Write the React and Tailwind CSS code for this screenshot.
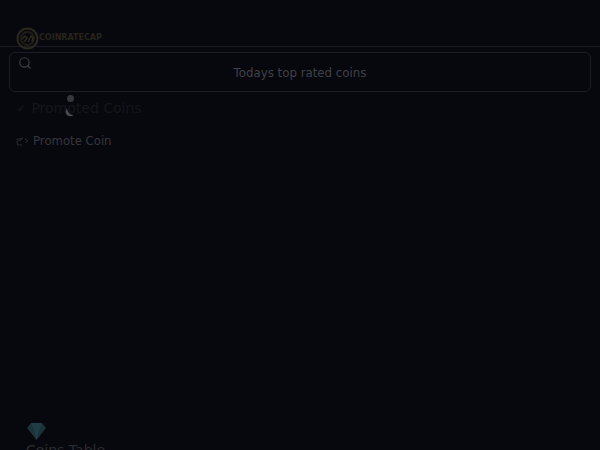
import { Search } from "lucide-react";

function Logo() {
  return (
    <svg width="23" height="23" viewBox="0 0 23 23" fill="none" className="shrink-0">
      <circle cx="11.5" cy="11.5" r="10" stroke="#2b281e" strokeWidth="2" />
      <circle cx="11.5" cy="11.5" r="6.5" stroke="#1f1d17" strokeWidth="2" />
      <path d="M6 12l3-3 2 2-3 4M12 15l3-6 2 2-1 4" stroke="#2b281e" strokeWidth="1.5" />
    </svg>
  );
}

function App() {
  return (
    <div className="relative h-[450px] w-[600px] overflow-hidden bg-[#07080d] font-['DejaVu_Sans',sans-serif]">
      <header className="flex h-[47px] items-end border-b border-[#1a1b20] pl-4">
        <div className="-mb-[3.5px] flex items-center">
          <Logo />
          <span className="text-[8px] font-bold leading-none text-[#27241c]">COINRATECAP</span>
        </div>
      </header>

      <div className="relative mx-[9px] mt-[5px] flex h-10 items-center justify-center rounded-md border border-[#1c1d22] pt-[3px]">
        <Search size={14} className="absolute left-[8px] top-[3px] text-[#3c3d42]" />
        <span className="text-[11.8px] text-[#404146]">Todays top rated coins</span>
      </div>

      <div className="mt-[6px] flex items-center gap-[6px] pl-[17px]">
        <span className="text-[10px] text-[#15161b]">✔</span>
        <span className="text-sm text-[#15161b]">Promoted Coins</span>
      </div>

      <div className="mt-[15px] flex items-center gap-[4px] pl-[15px]">
        <svg width="14" height="11" viewBox="0 0 14 11" fill="none" stroke="#2a2b30" strokeWidth="1">
          <path d="M1.5 3.5L8 2 6 4 2 5.5 2.5 9H7M10 3l3 2-2.5 1.5" />
        </svg>
        <span className="text-[11.7px] text-[#36373c]">Promote Coin</span>
      </div>

      <div className="absolute left-[67px] top-[95px] h-[7px] w-[7px] rounded-full bg-[#36373c]" />
      <svg width="10" height="10" viewBox="0 0 10 10" className="absolute left-[65px] top-[107px]">
        <path d="M2 1.5A4.5 4.5 0 1 0 8.5 8A7 7 0 0 1 2 1.5z" fill="#4a4b50" />
      </svg>

      <div className="absolute left-[26px] top-[422px]">
        <svg width="21" height="19" viewBox="0 0 21 19">
          <path d="M5 1h11l4 5-9.5 12L1 6z" fill="#1a3238" />
          <path d="M5 1l2 5h7l2-5zM7 6l3.5 12L14 6z" fill="#203c44" />
        </svg>
        <div className="mt-[2px] text-sm leading-none text-[#2a2b30]">Coins Table</div>
      </div>
    </div>
  );
}

export default App;
